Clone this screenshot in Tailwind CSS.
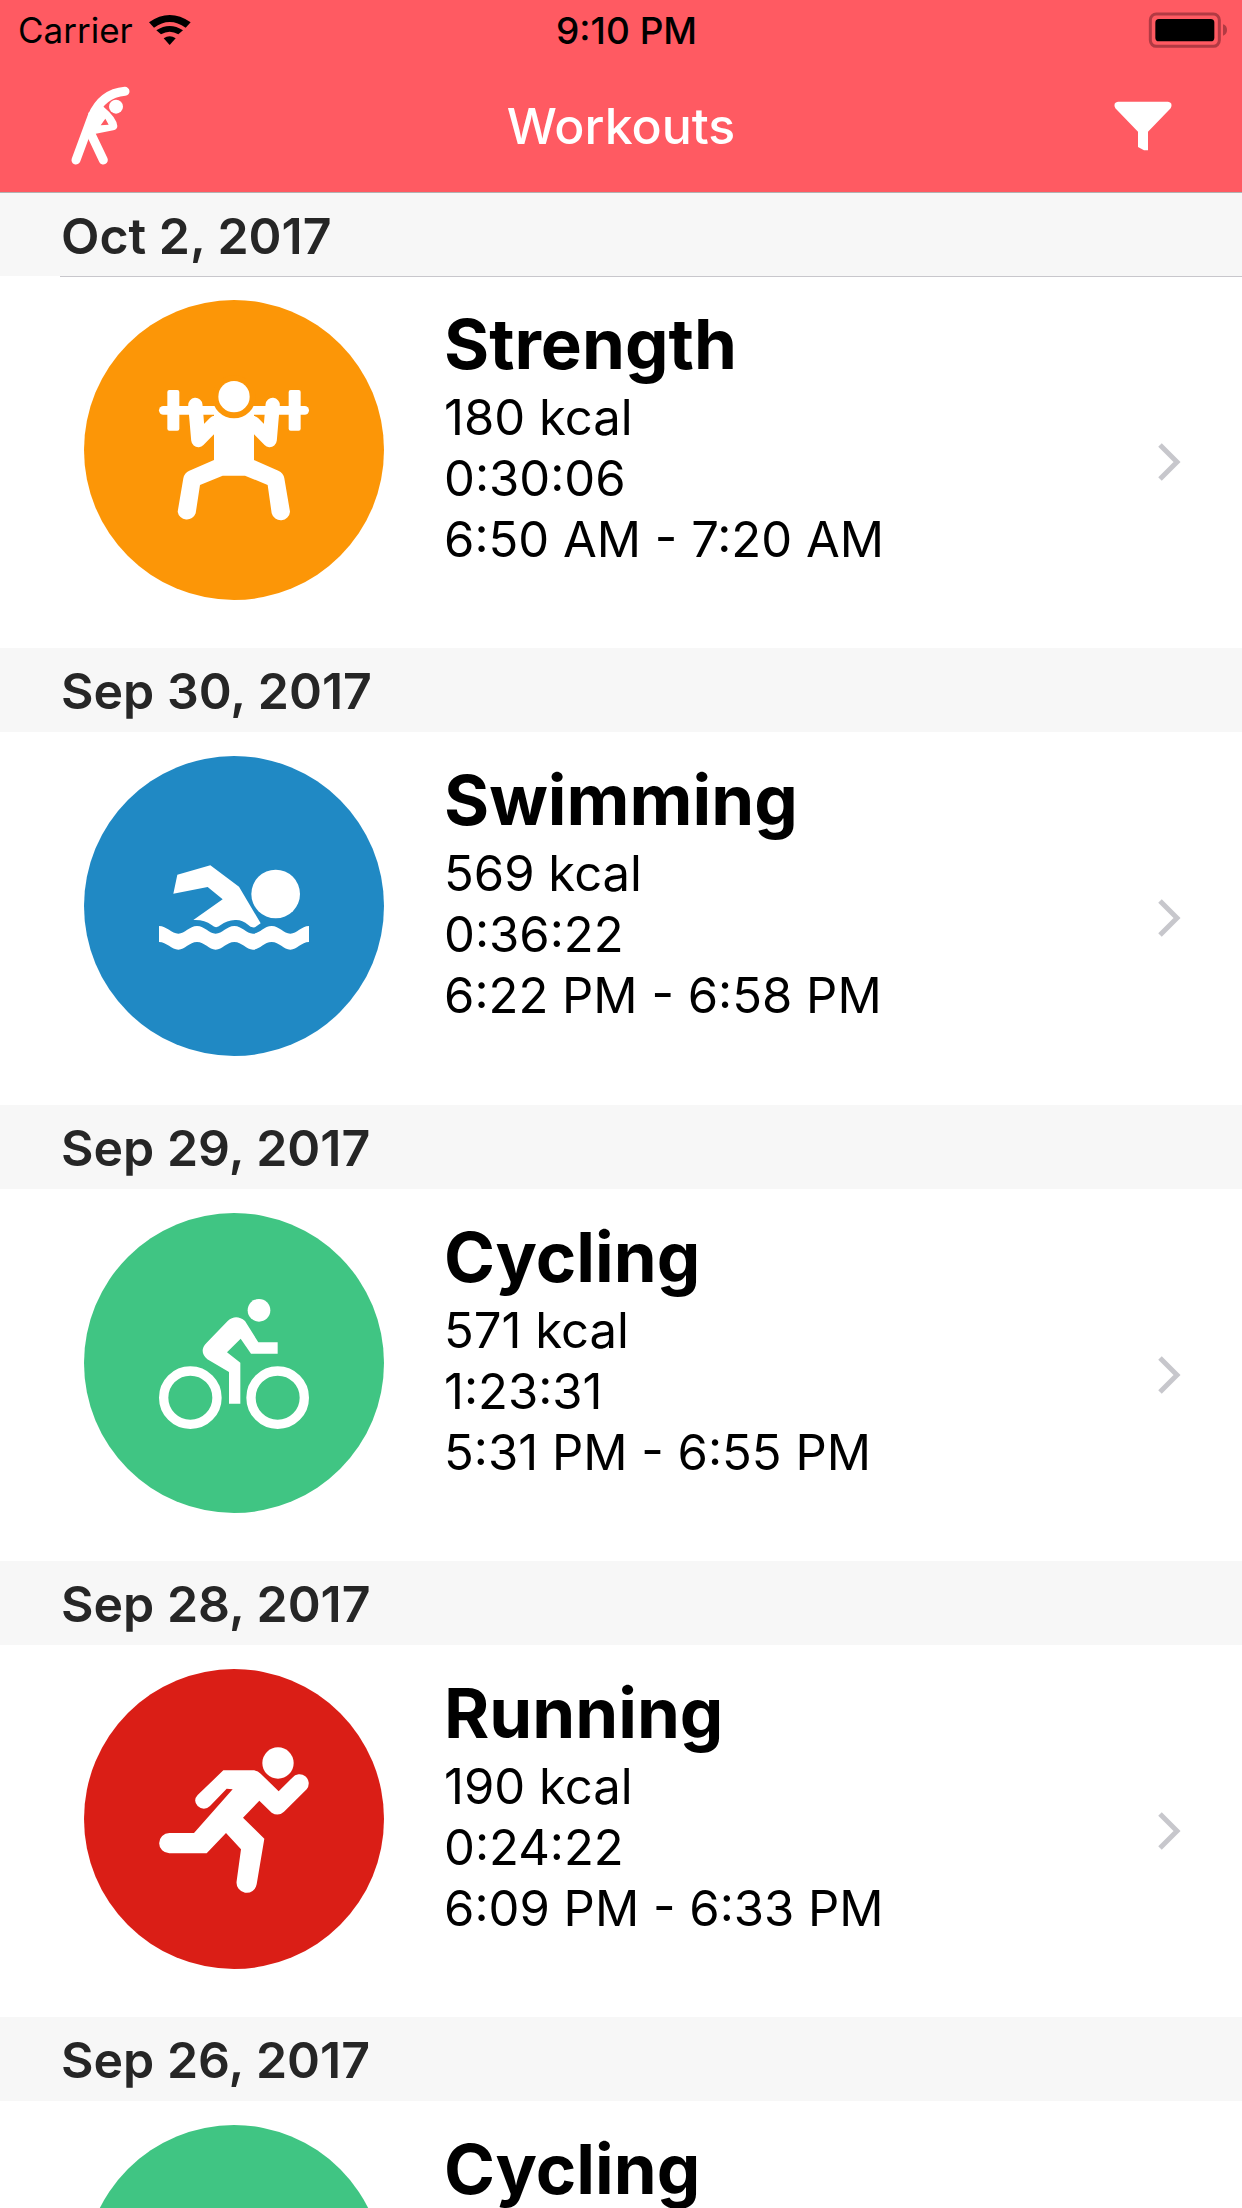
<!DOCTYPE html>
<html lang="en">
<head>
    <meta charset="UTF-8">
    <meta name="viewport" content="width=device-width, initial-scale=1.0">
    <title>Workouts</title>
    <script src="https://cdn.jsdelivr.net/npm/@tailwindcss/browser@4"></script>
</head>
<body class="w-[1242px] h-[2208px] overflow-hidden bg-white font-[Inter] text-black">

    <header class="bg-[#ff5a62] border-b border-[#b2b2b2]">
        <div class="relative h-[60px] flex items-center justify-between">
            <div class="flex items-center pl-[18px]">
                <span class="text-[35px] leading-none">Carrier</span>
                <svg class="ml-[6px]" width="60" height="50" viewBox="0 0 180 150">
                    <path d="M30 52 Q92 8 155 52 L140 68 Q92 34 45 68 Z" fill="#000"/>
                    <path d="M52 76 Q92 50 132 76 L118 88 Q92 72 66 88 Z" fill="#000"/>
                    <path d="M74 100 Q92 88 110 100 L92 120 Z" fill="#000"/>
                </svg>
            </div>
            <span class="absolute left-[556px] top-[12px] text-[37px] leading-none font-medium">9:10 PM</span>
            <svg class="mr-[12px]" width="90" height="50" viewBox="0 0 270 150">
                <rect x="31" y="27" width="207" height="97" rx="18" fill="none" stroke="#b23a43" stroke-width="9"/>
                <rect x="46" y="42" width="177" height="67" rx="11" fill="#000"/>
                <path d="M249 58 Q261 62 261 75 Q261 88 249 92 Z" fill="#b23a43"/>
            </svg>
        </div>
        <div class="h-[132px] grid grid-cols-[1fr_auto_1fr] items-center">
            <div class="pl-[60px]">
                <svg width="90" height="100" viewBox="0 0 270 300">
                    <circle cx="168" cy="92" r="21" fill="#fff"/>
                    <path d="M48 252 L96 122 Q126 52 195 46" fill="none" stroke="#fff" stroke-width="27" stroke-linecap="round"/>
                    <path d="M92 172 L130 252" fill="none" stroke="#fff" stroke-width="27" stroke-linecap="round"/>
                    <path d="M85 110 L128 90 Q170 125 172 150 Q172 160 160 163 L85 178 Z M122 148 L146 146 L136 128 Z" fill="#fff" fill-rule="evenodd"/>
                </svg>
            </div>
            <h1 class="text-[50px] leading-none font-medium text-white">Workouts</h1>
            <div class="flex justify-end pr-[62px]">
                <svg width="80" height="70" viewBox="0 0 240 210">
                    <path d="M54 32 L204 32 Q220 34 212 52 L144 122 L144 178 L132 178 L114 168 L114 122 L46 52 Q38 34 54 32 Z" fill="#fff"/>
                </svg>
            </div>
        </div>
    </header>

    <main>
        <div class="h-[83px] bg-[#f7f7f7] pl-[61px] pt-[3px] flex items-center text-[50px] font-semibold text-[#262626]">Oct 2, 2017</div>
        <div class="h-px ml-[60px] bg-[#c8c7cc]"></div>
        <section class="h-[371.25px] flex items-start pl-[84px] pr-[61px]">
            <div class="mt-[23px] size-[300px] shrink-0 rounded-full bg-[#fc9607]">
                <svg width="300" height="300" viewBox="-138 -150 900 900">
                    <g fill="#fff">
                        <rect x="87" y="168" width="450" height="26" rx="13"/>
                        <rect x="112" y="120" width="36" height="122" rx="6"/>
                        <rect x="476" y="120" width="36" height="122" rx="6"/>
                        <path d="M252 190 L372 190 L372 330 L445 362 Q460 368 463 385 L480 485 A28 28 0 0 1 425 490 L413 405 L345 377 L278 377 L210 405 L197 490 A28 28 0 0 1 143 485 L160 385 Q163 368 178 362 L252 330 Z"/>
                    </g>
                    <g fill="none" stroke="#fff" stroke-width="43" stroke-linecap="round" stroke-linejoin="round">
                        <path d="M196 165 L205 270 L255 219"/>
                        <path d="M428 165 L419 270 L369 219"/>
                    </g>
                    <circle cx="312" cy="140" r="65" fill="#fc9607"/>
                    <circle cx="312" cy="140" r="47" fill="#fff"/>
                </svg>
            </div>
            <div class="ml-[60px] flex-1 pt-[25px]">
                <h2 class="text-[69px] leading-[85px] font-bold">Strength</h2>
                <p class="text-[49px] leading-[61px]">180 kcal</p>
                <p class="text-[49px] leading-[61px]">0:30:06</p>
                <p class="text-[49px] leading-[61px]">6:50 AM - 7:20 AM</p>
            </div>
            <svg class="mt-[165px] shrink-0" width="24" height="40" viewBox="0 0 24 40">
                <path d="M3 3 L20 20 L3 37" fill="none" stroke="#c7c7cc" stroke-width="5"/>
            </svg>
        </section>

        <div class="h-[84px] bg-[#f7f7f7] pl-[61px] pt-[3px] flex items-center text-[50px] font-semibold text-[#262626]">Sep 30, 2017</div>
        <section class="h-[372.25px] flex items-start pl-[84px] pr-[61px]">
            <div class="mt-[24px] size-[300px] shrink-0 rounded-full bg-[#2089c4]">
                <svg width="300" height="300" viewBox="-138 -222 900 900">
                    <g fill="#fff">
                        <circle cx="437" cy="192" r="73"/>
                        <path d="M142 134 L241 106 L327 170 L392 280 L375 292 Q362 294 355 285 Q335 268 315 270 Q290 272 272 285 Q258 298 245 285 Q222 268 190 270 L278 208 L233 171 L130 191 Z"/>
                        <path d="M87 288 C110 288 125 311 145 311 C165 311 178 288 201 288 C224 288 237 311 257 311 C277 311 290 288 313 288 C336 288 349 311 369 311 C389 311 402 288 425 288 C448 288 461 311 481 311 C501 311 514 288 537 288 L537 336 C514 336 501 359 481 359 C461 359 448 336 425 336 C402 336 389 359 369 359 C349 359 336 336 313 336 C290 336 277 359 257 359 C237 359 224 336 201 336 C178 336 165 359 145 359 C125 359 110 336 87 336 Z"/>
                    </g>
                </svg>
            </div>
            <div class="ml-[60px] flex-1 pt-[26px]">
                <h2 class="text-[69px] leading-[85px] font-bold">Swimming</h2>
                <p class="text-[49px] leading-[61px]">569 kcal</p>
                <p class="text-[49px] leading-[61px]">0:36:22</p>
                <p class="text-[49px] leading-[61px]">6:22 PM - 6:58 PM</p>
            </div>
            <svg class="mt-[166px] shrink-0" width="24" height="40" viewBox="0 0 24 40">
                <path d="M3 3 L20 20 L3 37" fill="none" stroke="#c7c7cc" stroke-width="5"/>
            </svg>
        </section>

        <div class="h-[84px] bg-[#f7f7f7] pl-[61px] pt-[3px] flex items-center text-[50px] font-semibold text-[#262626]">Sep 29, 2017</div>
        <section class="h-[372.25px] flex items-start pl-[84px] pr-[61px]">
            <div class="mt-[24px] size-[300px] shrink-0 rounded-full bg-[#40c583]">
                <svg width="300" height="300" viewBox="-138 -174 900 900">
                    <circle cx="387" cy="118" r="34" fill="#fff"/>
                    <circle cx="181" cy="380" r="80" fill="none" stroke="#fff" stroke-width="28"/>
                    <circle cx="443" cy="380" r="80" fill="none" stroke="#fff" stroke-width="28"/>
                    <path d="M293 150 Q318 128 345 150 L385 214 L443 214 L443 248 L363 248 L332 203 L291 244 L331 275 L331 398 L297 398 L297 303 L232 265 Q205 240 230 215 Z" fill="#fff"/>
                </svg>
            </div>
            <div class="ml-[60px] flex-1 pt-[26px]">
                <h2 class="text-[69px] leading-[85px] font-bold">Cycling</h2>
                <p class="text-[49px] leading-[61px]">571 kcal</p>
                <p class="text-[49px] leading-[61px]">1:23:31</p>
                <p class="text-[49px] leading-[61px]">5:31 PM - 6:55 PM</p>
            </div>
            <svg class="mt-[166px] shrink-0" width="24" height="40" viewBox="0 0 24 40">
                <path d="M3 3 L20 20 L3 37" fill="none" stroke="#c7c7cc" stroke-width="5"/>
            </svg>
        </section>

        <div class="h-[84px] bg-[#f7f7f7] pl-[61px] pt-[3px] flex items-center text-[50px] font-semibold text-[#262626]">Sep 28, 2017</div>
        <section class="h-[372.25px] flex items-start pl-[84px] pr-[61px]">
            <div class="mt-[24px] size-[300px] shrink-0 rounded-full bg-[#da1e16]">
                <svg width="300" height="300" viewBox="-138 -156 900 900">
                    <circle cx="444" cy="126" r="47" fill="#fff"/>
                    <path d="M280 148 L372 148 Q385 150 392 158 L446 211 L487 170 A27 27 0 0 1 530 205 L462 272 Q445 288 425 275 L388 239 L339 290 L403 353 L380 490 A30 30 0 0 1 320 480 L333 385 L288 336 L230 397 L118 397 A30 30 0 0 1 118 336 L192 336 L308 205 L290 203 L240 255 Q222 272 203 255 Q188 238 203 222 Z" fill="#fff"/>
                </svg>
            </div>
            <div class="ml-[60px] flex-1 pt-[26px]">
                <h2 class="text-[69px] leading-[85px] font-bold">Running</h2>
                <p class="text-[49px] leading-[61px]">190 kcal</p>
                <p class="text-[49px] leading-[61px]">0:24:22</p>
                <p class="text-[49px] leading-[61px]">6:09 PM - 6:33 PM</p>
            </div>
            <svg class="mt-[166px] shrink-0" width="24" height="40" viewBox="0 0 24 40">
                <path d="M3 3 L20 20 L3 37" fill="none" stroke="#c7c7cc" stroke-width="5"/>
            </svg>
        </section>

        <div class="h-[84px] bg-[#f7f7f7] pl-[61px] pt-[3px] flex items-center text-[50px] font-semibold text-[#262626]">Sep 26, 2017</div>
        <section class="h-[107px] overflow-hidden flex items-start pl-[84px] pr-[61px]">
            <div class="mt-[24px] size-[300px] shrink-0 rounded-full bg-[#40c583]"></div>
            <div class="ml-[60px] flex-1 pt-[26px]">
                <h2 class="text-[69px] leading-[85px] font-bold">Cycling</h2>
            </div>
        </section>
    </main>
</body>
</html>
